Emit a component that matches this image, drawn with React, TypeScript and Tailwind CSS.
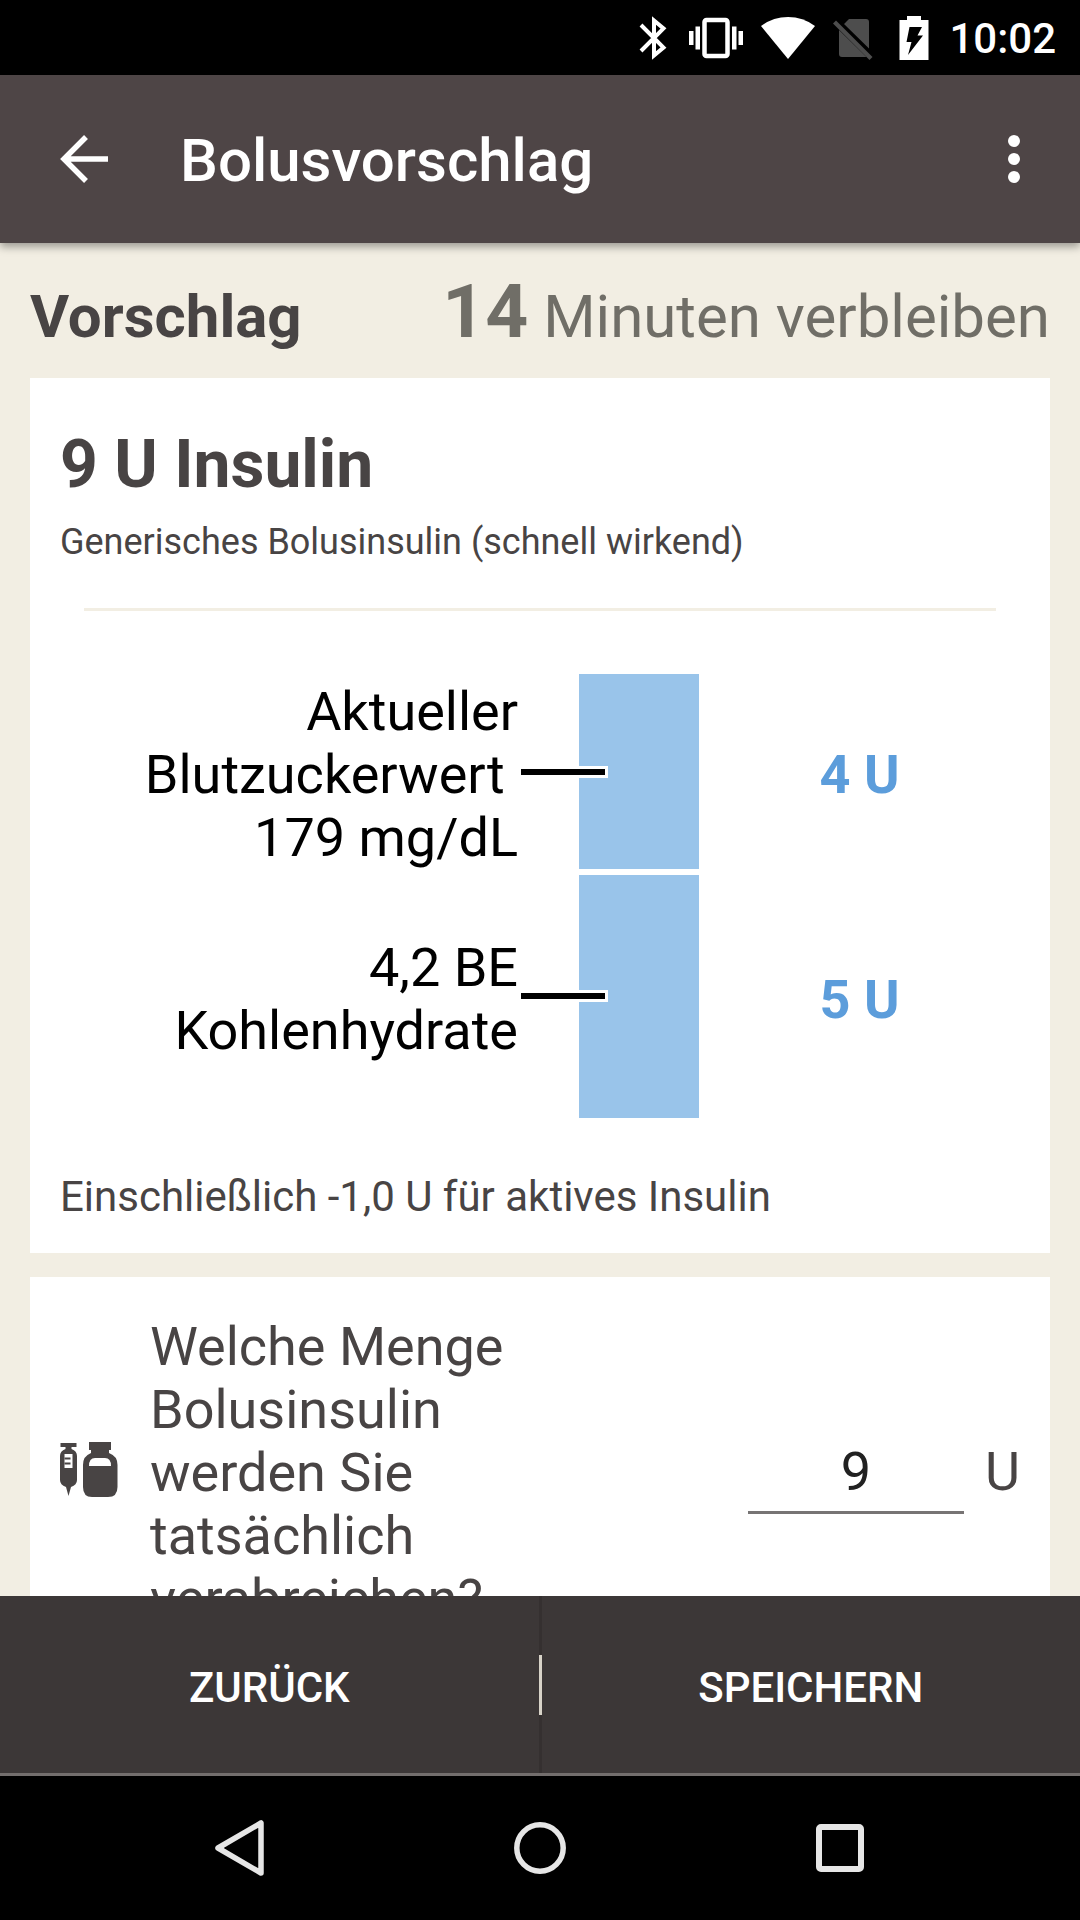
import { useState } from "react";

const doses = [
  { id: "bg", lines: ["Aktueller", "Blutzuckerwert\u00a0", "179 mg/dL"], units: 4 },
  { id: "carbs", lines: ["4,2 BE", "Kohlenhydrate"], units: 5 },
];

function StatusBar() {
  return (
    <div className="flex h-[75px] shrink-0 items-center justify-end bg-black pr-6 text-white">
      <svg className="mr-[22px] h-[44px] w-[28px]" viewBox="0 0 28 44" fill="none" stroke="currentColor" strokeWidth="4">
        <path d="M2 9L24.500 31.500L15 39.500V4.500L24.500 12.500L2 35" />
      </svg>
      <svg className="mr-[18px] h-[42px] w-[54px]" viewBox="0 0 54 42" fill="currentColor">
        <rect x="15.500" y="3" width="23" height="36" rx="2" fill="none" stroke="currentColor" strokeWidth="4.500" />
        <path d="M0 14h4.500v14H0zM6.500 9.500H11v23H6.500zM43 9.500h4.500v23H43zM49.500 14H54v14h-4.500z" />
      </svg>
      <svg className="mr-[18px] h-[44px] w-[54px]" viewBox="0 0 54 44" fill="currentColor">
        <path d="M27 43L0 10Q12 1 27 1T54 10Z" />
      </svg>
      <svg className="mr-[26px] h-[44px] w-[40px]" viewBox="0 0 40 44" fill="#4d4d4d">
        <path d="M11 8L16 3H33Q36 3 36 6V32.500ZM6 14L33.500 41H9Q6 41 6 38Z" />
        <path d="M0 7.500L3 4.500L39.500 41L36.500 44Z" />
      </svg>
      <svg className="mr-[20px] h-[46px] w-[30px]" viewBox="0 0 30 46">
        <path fill="currentColor" d="M8 1H22V5H29.500V45H.5V5H8Z" />
        <path fill="#000" d="M10.500 12H23L18.500 20.500H24L9 40L12.500 27H7.500Z" />
      </svg>
      <span className="pt-[2px] text-[42px] leading-[49px] font-medium">10:02</span>
    </div>
  );
}

function AppBar() {
  return (
    <header className="relative z-10 flex h-[168px] shrink-0 items-center bg-[#4e4546] pr-[48px] pl-[60px] text-white shadow-[0_4px_8px_rgba(0,0,0,0.35)]">
      <button type="button" aria-label="Zurück">
        <svg className="h-[48px] w-[48px]" viewBox="0 0 48 48" fill="none" stroke="currentColor" strokeWidth="5.500">
          <path d="M26 2L4 24L26 46M4 24H48" />
        </svg>
      </button>
      <h1 className="ml-[72px] flex-1 pt-1 text-[60px] leading-[70px] font-medium">Bolusvorschlag</h1>
      <button type="button" aria-label="Weitere Optionen">
        <svg className="h-[48px] w-[36px]" viewBox="0 0 36 48" fill="currentColor">
          <circle cx="18" cy="6" r="6" />
          <circle cx="18" cy="24" r="6" />
          <circle cx="18" cy="42" r="6" />
        </svg>
      </button>
    </header>
  );
}

function DoseChart() {
  return (
    <div className="mt-[63px] flex h-[444px] flex-col gap-[6px]">
      {doses.map((dose) => (
        <div
          key={dose.id}
          className="grid min-h-0 basis-0 grid-cols-[519fr_120px_321fr] items-stretch text-[54px] leading-[63px]"
          style={{ flexGrow: dose.units }}
        >
          <div className="flex flex-col justify-center pt-[6px] pr-[61px] text-right text-black">
            {dose.lines.map((line) => (
              <span key={line}>{line}</span>
            ))}
          </div>
          <div className="relative flex items-center bg-[#99c4ea]">
            <span className="absolute -left-[58px] h-[12px] w-[87px] border-y-[3px] border-r-[3px] border-white bg-black" />
          </div>
          <div className="flex items-center justify-center pt-[6px] font-bold text-[#5c9ddb]">{dose.units} U</div>
        </div>
      ))}
    </div>
  );
}

function SyringeVialIcon() {
  return (
    <svg className="mb-[6px] h-[58px] w-[60px] shrink-0" viewBox="1 0 60 58">
      <g fill="#484444">
        <path d="M1.500 2H17.500V6H12.500V8Q18 10 18 15V39Q18 44 12 46L9.500 55L7 46Q1 44 1 39V15Q1 10 6.500 8V6H1.500Z" />
        <path d="M30 1H52V9H50V12Q58.500 15 58.500 24V46Q58.500 56 49 56H33Q24 56 24 46V24Q24 15 32 12V9H30Z" />
      </g>
      <g fill="#fff">
        <path d="M5.500 13H13.500V27H5.500Z" />
        <path d="M30 25Q30 17 36 17H46Q52 17 52 25Z" />
      </g>
      <path d="M5.500 17.500H11.500M5.500 22.500H11.500" stroke="#484444" strokeWidth="2" />
    </svg>
  );
}

function NavBar() {
  return (
    <nav className="flex h-[144px] shrink-0 items-center justify-center gap-[240px] bg-black text-[#e6e6e6]">
      <button type="button" aria-label="Zurück">
        <svg className="h-[60px] w-[60px]" viewBox="0 0 60 60" fill="none" stroke="currentColor" strokeWidth="5.500" strokeLinejoin="round">
          <path d="M51 5V55L8 30Z" />
        </svg>
      </button>
      <button type="button" aria-label="Startbildschirm">
        <svg className="h-[60px] w-[60px]" viewBox="0 0 60 60" fill="none" stroke="currentColor" strokeWidth="5.500">
          <circle cx="30" cy="30" r="23.200" />
        </svg>
      </button>
      <button type="button" aria-label="Übersicht">
        <svg className="h-[60px] w-[60px]" viewBox="0 0 60 60" fill="none" stroke="currentColor" strokeWidth="6">
          <rect x="9" y="9" width="42" height="42" rx="2" />
        </svg>
      </button>
    </nav>
  );
}

export default function App() {
  const [amount, setAmount] = useState("9");

  return (
    <div className="flex h-screen flex-col bg-[#f2eee3] font-[Roboto,sans-serif] text-[#484444]">
      <StatusBar />
      <AppBar />

      <main className="min-h-0 flex-1 overflow-y-auto px-[30px] pb-6 [scrollbar-width:none]">
        <div className="flex items-baseline justify-between pt-6 pb-[17px] text-[60px] leading-[88px]">
          <h2 className="font-bold">Vorschlag</h2>
          <p className="text-[#706e67]">
            <span className="text-[75px] font-bold">14</span> Minuten verbleiben
          </p>
        </div>

        <section className="bg-white px-[30px] pt-12 pb-[32px]">
          <h3 className="text-[66px] leading-[77px] font-bold">9 U Insulin</h3>
          <p className="mt-[18px] text-[36px] leading-[42px]">Generisches Bolusinsulin (schnell wirkend)</p>
          <hr className="mx-6 mt-[45px] border-t-[3px] border-[#f2eee3]" />
          <DoseChart />
          <p className="mt-[54px] text-[42px] leading-[49px]">Einschließlich -1,0 U für aktives Insulin</p>
        </section>

        <section className="mt-6 flex items-center bg-white px-[30px] py-[38px] text-[54px] leading-[63px]">
          <SyringeVialIcon />
          <label htmlFor="amount" className="ml-[30px] w-2/5">
            Welche Menge Bolusinsulin werden Sie tatsächlich verabreichen?
          </label>
          <div className="ml-auto flex items-baseline gap-[21px]">
            <input
              id="amount"
              inputMode="decimal"
              value={amount}
              onChange={(e) => setAmount(e.target.value)}
              className="h-[82px] w-[216px] border-b-[3px] border-[#777474] text-center text-[#212121] outline-none"
            />
            <span>U</span>
          </div>
        </section>
      </main>

      <footer className="flex h-[180px] shrink-0 items-stretch border-b-[3px] border-[#736e6d] bg-[#3c3737] text-[42px] leading-[49px] font-medium text-white">
        <button type="button" className="flex-1 pt-[6px]">
          ZURÜCK
        </button>
        <div className="flex w-[3px] items-center bg-[#353030]">
          <span className="h-[60px] w-full bg-[#d8d3c8]" />
        </div>
        <button type="button" className="flex-1 pt-[6px]">
          SPEICHERN
        </button>
      </footer>

      <NavBar />
    </div>
  );
}
